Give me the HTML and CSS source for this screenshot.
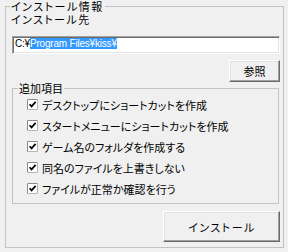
FILE: index.html
```html
<!DOCTYPE html>
<html lang="ja">
<head>
<meta charset="utf-8">
<title>インストール</title>
<link rel="stylesheet" href="styles.css">
</head>
<body>
<fieldset class="group outer">
  <legend class="legend outer-legend">インストール情報</legend>
  <div class="label">インストール先</div>
  <div class="textbox"><span>C:¥</span><span class="sel">Program Files¥kiss¥</span></div>
  <div class="row-right browse-row"><button class="btn browse">参照</button></div>
  <fieldset class="group inner">
    <legend class="legend inner-legend">追加項目</legend>
    <ul class="options">
      <li class="option"><svg class="check" width="11" height="11" viewBox="0 0 11 11"><rect x="0" y="0" width="11" height="11" fill="#fff"/><path d="M0.5 10.5V0.5H10.5" fill="none" stroke="#8a8a8a"/><path d="M10.5 0.5V10.5H0.5" fill="none" stroke="#b5b5b5"/><path d="M2.6 5.2 L4.6 7.4 L8.6 2.9" fill="none" stroke="#000" stroke-width="1.7"/></svg><span>デスクトップにショートカットを作成</span></li>
      <li class="option"><svg class="check" width="11" height="11" viewBox="0 0 11 11"><rect x="0" y="0" width="11" height="11" fill="#fff"/><path d="M0.5 10.5V0.5H10.5" fill="none" stroke="#8a8a8a"/><path d="M10.5 0.5V10.5H0.5" fill="none" stroke="#b5b5b5"/><path d="M2.6 5.2 L4.6 7.4 L8.6 2.9" fill="none" stroke="#000" stroke-width="1.7"/></svg><span>スタートメニューにショートカットを作成</span></li>
      <li class="option"><svg class="check" width="11" height="11" viewBox="0 0 11 11"><rect x="0" y="0" width="11" height="11" fill="#fff"/><path d="M0.5 10.5V0.5H10.5" fill="none" stroke="#8a8a8a"/><path d="M10.5 0.5V10.5H0.5" fill="none" stroke="#b5b5b5"/><path d="M2.6 5.2 L4.6 7.4 L8.6 2.9" fill="none" stroke="#000" stroke-width="1.7"/></svg><span>ゲーム名のフォルダを作成する</span></li>
      <li class="option"><svg class="check" width="11" height="11" viewBox="0 0 11 11"><rect x="0" y="0" width="11" height="11" fill="#fff"/><path d="M0.5 10.5V0.5H10.5" fill="none" stroke="#8a8a8a"/><path d="M10.5 0.5V10.5H0.5" fill="none" stroke="#b5b5b5"/><path d="M2.6 5.2 L4.6 7.4 L8.6 2.9" fill="none" stroke="#000" stroke-width="1.7"/></svg><span>同名のファイルを上書きしない</span></li>
      <li class="option"><svg class="check" width="11" height="11" viewBox="0 0 11 11"><rect x="0" y="0" width="11" height="11" fill="#fff"/><path d="M0.5 10.5V0.5H10.5" fill="none" stroke="#8a8a8a"/><path d="M10.5 0.5V10.5H0.5" fill="none" stroke="#b5b5b5"/><path d="M2.6 5.2 L4.6 7.4 L8.6 2.9" fill="none" stroke="#000" stroke-width="1.7"/></svg><span>ファイルが正常か確認を行う</span></li>
    </ul>
  </fieldset>
  <div class="row-right install-row"><button class="btn install">インストール</button></div>
</fieldset>
</body>
</html>
```

FILE: styles.css
```css
html, body {
  margin: 0;
  padding: 0;
}
body {
  background: #f0f0f0;
  color: #000;
  font-family: "Noto Sans CJK JP", "Noto Sans", sans-serif;
  font-size: 11px;
  font-feature-settings: "palt";
  width: 288px;
  height: 252px;
  overflow: hidden;
}
.group {
  box-sizing: border-box;
  margin: 0;
  border: 1px solid #c2c2c2;
  min-width: 0;
}
.legend {
  padding: 0 1px;
  line-height: 12px;
}
.outer {
  margin-left: 5px;
  width: 279px;
  height: 248px;
  padding: 0 3px 5px 6px;
}
.outer-legend {
  margin-left: -2px;
  letter-spacing: 1.5px;
}
.label {
  line-height: 14px;
  margin-left: -1px;
  letter-spacing: 1.4px;
}
.textbox {
  box-sizing: border-box;
  margin-top: 10px;
  height: 18px;
  width: 268px;
  background: #fff;
  border: 1px solid;
  border-color: #a0a0a0 #ffffff #ffffff #a0a0a0;
  box-shadow: inset 1px 1px 0 #6d6d6d, inset -1px -1px 0 #e3e3e3;
  padding: 1px 0 0 2px;
  font-family: "Liberation Sans", Arial, sans-serif;
  font-size: 10px;
  letter-spacing: -0.2px;
  line-height: 12px;
  white-space: nowrap;
}
.sel {
  background: #3399ff;
  color: #fff;
}
.row-right {
  display: flex;
  justify-content: flex-end;
}
.browse-row {
  margin-top: 6px;
}
.install-row {
  margin-top: 7px;
}
.btn {
  box-sizing: border-box;
  margin: 0;
  padding: 0;
  background: #f0f0f0;
  border: 1px solid;
  border-color: #ffffff #696969 #696969 #ffffff;
  box-shadow: inset -1px -1px 0 #a0a0a0, inset 1px 1px 0 #e3e3e3;
  font-family: "Noto Sans CJK JP", "Noto Sans", sans-serif;
  font-size: 11px;
  font-feature-settings: "palt";
  color: #000;
}
.browse {
  width: 51px;
  height: 22px;
}
.install {
  width: 117px;
  height: 31px;
  letter-spacing: 1.5px;
  padding-left: 1px;
}
.inner {
  width: 267px;
  height: 122px;
  padding: 0 0 0 14px;
}
.inner-legend {
  margin-left: -9px;
}
.options {
  list-style: none;
  margin: 0;
  padding: 0;
}
.option {
  display: flex;
  align-items: center;
  gap: 4px;
  height: 21px;
  white-space: nowrap;
}
.check {
  display: block;
  flex: none;
}
```
